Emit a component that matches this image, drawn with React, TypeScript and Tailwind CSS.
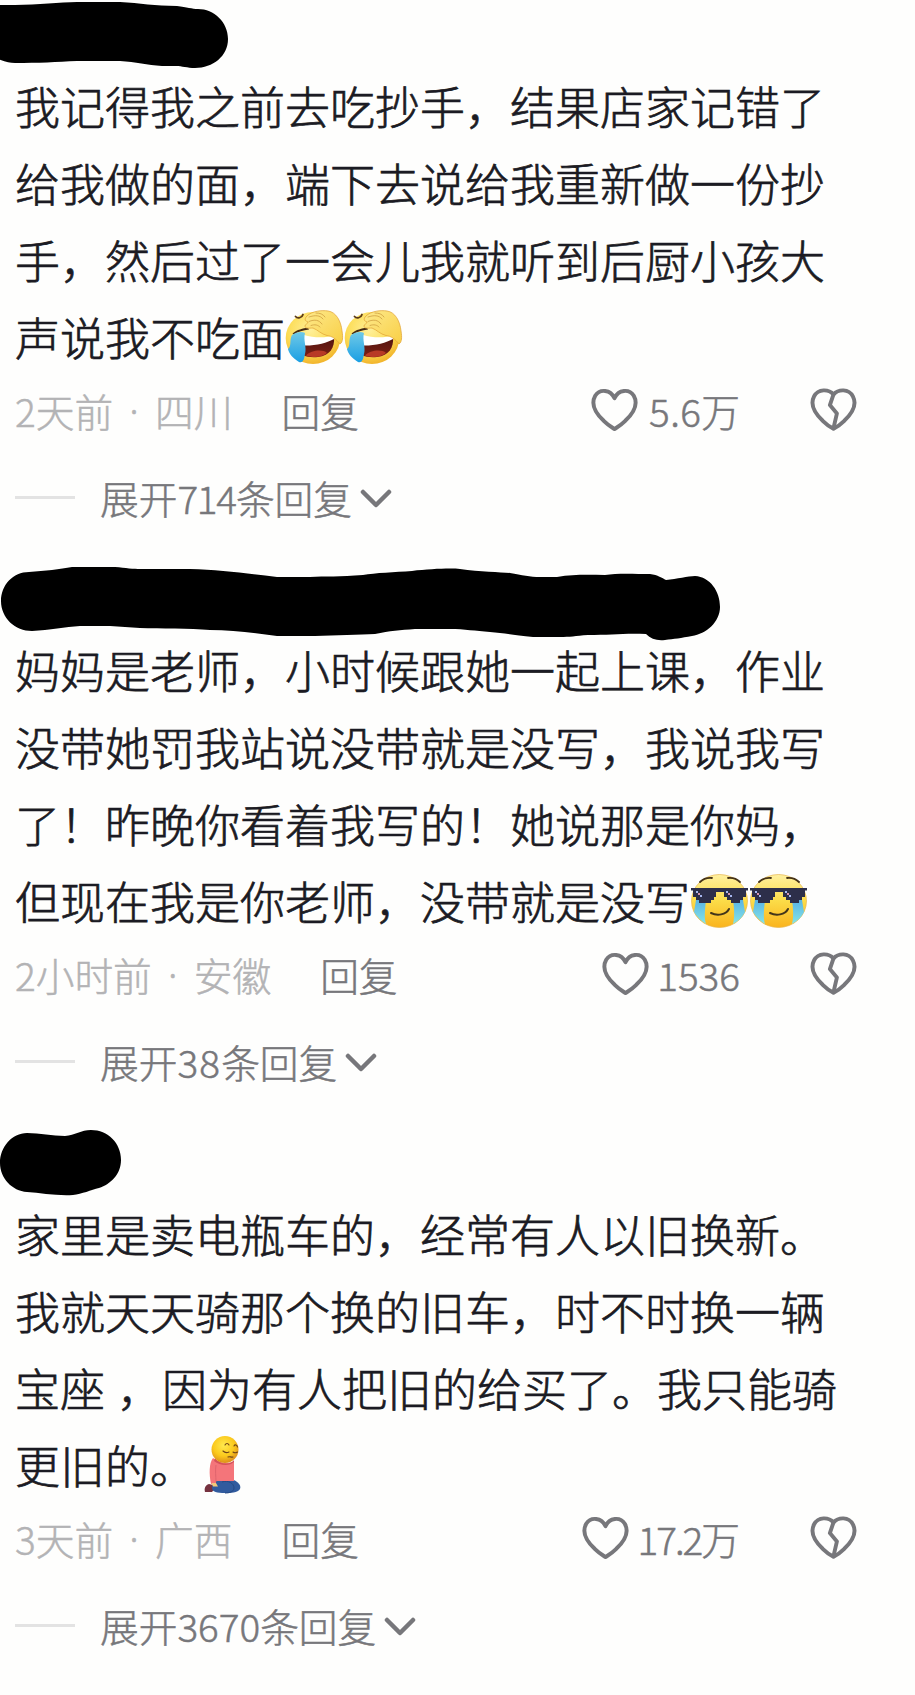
import React from "react";

type EmojiName = "facepalm" | "cool" | "kneel";

interface Comment {
  id: number;
  lines: string[];
  emojis: EmojiName[];
  time: string;
  place: string;
  likes: string;
  likesClass: string;
  replies: string;
  repliesClass: string;
  mask: string;
}

const comments: Comment[] = [
  {
    id: 1,
    lines: [
      "我记得我之前去吃抄手，结果店家记错了",
      "给我做的面，端下去说给我重新做一份抄",
      "手，然后过了一会儿我就听到后厨小孩大",
      "声说我不吃面",
    ],
    emojis: ["facepalm", "facepalm"],
    time: "2天前",
    place: "四川",
    likes: "5.6",
    likesClass: "ml-[11px] tracking-[0.4px]",
    replies: "714",
    repliesClass: "tracking-[-1.2px]",
    mask: "M-10 5H15C38 5 60 2 77 2H120C140 3 155 6 177 6C187 7 192 9 198 9C214 9 228 22 228 39C228 56 213 68 195 68C187 68 182 66 176 66H162C147 65 136 62 120 61H77C57 62 38 63 15 63C8 63 3 61 -10 56Z",
  },
  {
    id: 2,
    lines: [
      "妈妈是老师，小时候跟她一起上课，作业",
      "没带她罚我站说没带就是没写，我说我写",
      "了！昨晚你看着我写的！她说那是你妈，",
      "但现在我是你老师，没带就是没写",
    ],
    emojis: ["cool", "cool"],
    time: "2小时前",
    place: "安徽",
    likes: "1536",
    likesClass: "ml-[8px] tracking-[0px]",
    replies: "38",
    repliesClass: "tracking-[1.2px]",
    mask: "M29 8C45 7 60 5 72 3H115C126 4 133 5 141 5H190C220 6 245 9 277 13H310C325 12 340 13 363 11C375 9 395 8 412 7C430 5 450 4 460 5C480 8 500 8 510 9C522 11 530 13 540 13H557C575 10 590 11 605 11C617 9 635 10 650 10C658 11 662 14 666 16C677 15 688 12 695 12C710 13 720 27 720 43C720 58 706 70 692 72C681 74 674 75 665 76C657 77 651 75 646 70C625 69 610 71 588 71C575 72 570 73 560 73H533C513 71 503 69 490 68C475 67 465 65 450 65H415C400 66 390 67 375 70C360 71 335 71 315 72H277C255 69 233 66 210 66C190 64 160 65 140 64L110 62H80C65 63 50 66 32 67C15 67 1 54 1 37C1 21 13 8 29 8Z",
  },
  {
    id: 3,
    lines: [
      "家里是卖电瓶车的，经常有人以旧换新。",
      "我就天天骑那个换的旧车，时不时换一辆",
      "宝座 ，因为有人把旧的给买了。我只能骑",
      "更旧的。",
    ],
    emojis: ["kneel"],
    time: "3天前",
    place: "广西",
    likes: "17.2",
    likesClass: "ml-[9px] tracking-[-2px]",
    replies: "3670",
    repliesClass: "tracking-[0px]",
    mask: "M27 5C40 5 52 8 65 8C75 7 81 2 91 2C108 2 121 15 121 32C121 46 111 56 99 60C91 62 82 66 73 67C57 68 41 65 27 64C12 63 0 50 0 35C0 19 12 5 27 5Z",
  },
];

const FacepalmEmoji = () => (
  <svg viewBox="0 0 59 60" className="h-[60px] w-[59px]">
    <defs>
      <radialGradient id="face" cx="45%" cy="35%" r="65%">
        <stop offset="0" stopColor="#fff09a" />
        <stop offset="0.65" stopColor="#fcdc55" />
        <stop offset="1" stopColor="#f2b52c" />
      </radialGradient>
      <linearGradient id="tear" x1="0" y1="0" x2="0" y2="1">
        <stop offset="0" stopColor="#6fc9e8" />
        <stop offset="1" stopColor="#1a9fe3" />
      </linearGradient>
      <linearGradient id="mouth" x1="0" y1="0" x2="0" y2="1">
        <stop offset="0" stopColor="#4f1410" />
        <stop offset="1" stopColor="#7d2014" />
      </linearGradient>
      <linearGradient id="hand" x1="0" y1="0" x2="1" y2="1">
        <stop offset="0" stopColor="#fde98c" />
        <stop offset="1" stopColor="#f9cf45" />
      </linearGradient>
    </defs>
    <ellipse cx="28" cy="31" rx="27.3" ry="26" fill="url(#face)" />
    <path d="M18 36L49 30C50 40 45 49 33 50C27 50.5 21 50 18 48Z" fill="url(#mouth)" />
    <path d="M21 48.5C26 43 38 42 42 46C37 50.5 28 51 21 48.5Z" fill="#b83a26" />
    <path d="M19 28C29 31 40 31 50 28.5L49 32C42 36 30 39 18 38.5Z" fill="#fff" />
    <path d="M7.5 26.5C12 22.5 18 21.5 23 20.5L24 22.5C18 23.5 13 24.5 9 27.5Z" fill="#462b14" />
    <path d="M10.5 9.5C12.5 12 17 11 18 7.5" fill="none" stroke="#5b3a18" strokeWidth="1.8" strokeLinecap="round" />
    <path d="M7 28C11 25 17 24 20 26C18 33 22 40 20 47C19 53 18 56 14 55C8 51 4 47 3 42C7 39 4 33 7 28Z" fill="url(#tear)" />
    <path d="M22 9C27 4 37 3 43 4C51 5 56 14 57 24C58 30 58 35 55 37C51 32 47 29 42 28.5C36 27 33 23 28 21C24 21 20 22 20 19C20 17 23 17 23 15C20 14 19 12 22 9Z" fill="url(#hand)" stroke="#e3a83a" strokeWidth="0.8" />
    <path d="M24 10C30 8 35 8 38 12M24 14.5C30 12 34 13 37 17M26 18.5C30 17 33 18 35 20M31 6C35 6 38 7 40 10" fill="none" stroke="#cfa040" strokeWidth="0.8" strokeLinecap="round" />
  </svg>
);

const CoolEmoji = () => (
  <svg viewBox="0 0 59 60" className="h-[60px] w-[59px]">
    <defs>
      <linearGradient id="cool" x1="0" y1="0" x2="0" y2="1">
        <stop offset="0" stopColor="#fff0a0" />
        <stop offset="0.5" stopColor="#fbdc48" />
        <stop offset="1" stopColor="#fab41e" />
      </linearGradient>
      <linearGradient id="stream" x1="0" y1="0" x2="0" y2="1">
        <stop offset="0" stopColor="#58b3e5" />
        <stop offset="1" stopColor="#86e5e6" />
      </linearGradient>
    </defs>
    <ellipse cx="29.5" cy="30" rx="28" ry="26.5" fill="url(#cool)" stroke="#e7b64e" strokeWidth="0.7" />
    <path d="M6 29H16C15 38 14 47 16 53C11 50 7 46 4 41Z" fill="url(#stream)" />
    <path d="M43 29H53L55 41C52 47 48 50 43 53C45 45 44 36 43 29Z" fill="url(#stream)" />
    <path d="M10 11C13 8 17 6.5 22 7M38 7C43 6.5 47 8 50 11" fill="none" stroke="#453317" strokeWidth="1.8" strokeLinecap="round" />
    <path d="M1 17H58V19.5H56V26H53V29H50V32H41V29H37V26H34V21H26V26H24V29H21V32H9V29H6V26H3V19.5H1Z" fill="#2d2f4a" />
    <path d="M6 20H8V22H6ZM10 24H12V26H10ZM36 20H38V22H36ZM40 24H42V26H40Z" fill="#a6b6ef" />
    <path d="M8 22H10V24H8ZM38 22H40V24H38Z" fill="#d792ab" />
    <path d="M21 42C27 45 36 44 39 38" fill="none" stroke="#43351a" strokeWidth="2" strokeLinecap="round" />
  </svg>
);

const KneelEmoji = () => (
  <svg viewBox="0 0 59 60" className="h-[60px] w-[59px]">
    <defs>
      <radialGradient id="head" cx="45%" cy="35%" r="65%">
        <stop offset="0" stopColor="#ffe94e" />
        <stop offset="0.6" stopColor="#fbc91c" />
        <stop offset="1" stopColor="#dc8e1b" />
      </radialGradient>
    </defs>
    <path d="M14 49C10 50 9 54 10 57H17L22 51Z" fill="#76323f" />
    <path d="M18 46L33 44C40 44 47 49 45 54C43 58 35 58 30 58C22 58 17 57 17 53Z" fill="#315b9e" />
    <path d="M27 47C33 45 39 48 39 53C39 57 34 58 30 58" fill="none" stroke="#254984" strokeWidth="1" />
    <path d="M18 23C14 28 14 39 16 49H21V46H39L39 26C35 29 25 29 18 23Z" fill="#f4757a" />
    <path d="M21 30C20 36 21 41 21 47" fill="none" stroke="#d9606a" strokeWidth="0.8" />
    <path d="M16.5 48H21L23 51.5H18Z" fill="#f3c978" />
    <path d="M20 23C25 30 36 30 39 25V27C35 31 25 31 19 26Z" fill="#d4535a" />
    <circle cx="30" cy="14.5" r="13.5" fill="url(#head)" />
    <path d="M30 10C31 8 33 8 34 10M39 11C40 9 42 10 42.5 12M28 16C30 18 32 18 34 17M38 17C40 18.5 41 18 42.5 17M33 22C34.5 21 36 22.5 38 22" fill="none" stroke="#704517" strokeWidth="1.1" strokeLinecap="round" />
  </svg>
);

const emojiMap = {
  facepalm: FacepalmEmoji,
  cool: CoolEmoji,
  kneel: KneelEmoji,
};

const HeartIcon = () => (
  <svg viewBox="0 0 48 46" className="h-[46px] w-[47px]" fill="none" stroke="#77777b" strokeWidth="4" strokeLinejoin="round">
    <path d="M24 11C20 2 9 1 4.3 8.5C-1 18 5 26.5 13 34C17 38 21 40.5 24 42.5C27 40.5 31 38 35 34C43 26.5 49 18 43.7 8.5C39 1 28 2 24 11Z" />
  </svg>
);

const BrokenHeartIcon = () => (
  <svg viewBox="0 0 48 46" className="h-[46px] w-[47px]" fill="none" stroke="#77777b" strokeWidth="4" strokeLinejoin="round">
    <path d="M24 7C19 1.5 8.5 1 4.2 9C-0.5 18 5 26.5 13 34C17 38 21 40.5 24 42.2C27 40.5 31 38 35 34C43 26.5 48.5 18 43.8 9C39.5 1 29 1.5 24 7Z" />
    <path d="M24 7L20.3 18L27.5 26.5L24 41.5" />
  </svg>
);

const CommentItem: React.FC<{ comment: Comment }> = ({ comment }) => (
  <article className="h-[564px]">
    <div className="h-[67px]">
      <svg viewBox="0 0 915 78" className="h-[78px] w-[915px]">
        <path d={comment.mask} />
      </svg>
    </div>
    <div className="pl-[15px] text-[45px] leading-[77px] text-[#1b1b23] [word-spacing:2px] [-webkit-text-stroke:0.7px]">
      {comment.lines.map((line, i) => (
        <p key={line} className="flex h-[77px] items-center whitespace-pre">
          {line}
          {i === comment.lines.length - 1 &&
            comment.emojis.map((name, index) => {
              const Emoji = emojiMap[name];
              return <Emoji key={index} />;
            })}
        </p>
      ))}
    </div>
    <div className="flex h-[70px] items-center pl-[15px] text-[38.7px] text-[#b3b3b5] [-webkit-text-stroke:0.5px]">
      <span>{comment.time}</span>
      <span className="w-[42px] text-center font-['Open_Sans'] text-[44px] leading-none">·</span>
      <span>{comment.place}</span>
      <span className="ml-[49px] text-[#77777b]">回复</span>
      <div className="ml-auto flex items-center text-[#77777b]">
        <HeartIcon />
        <span className={comment.likesClass}>{comment.likes}</span>
        {comment.likes.includes(".") && <span>万</span>}
      </div>
      <div className="mr-[58px] ml-[70px]">
        <BrokenHeartIcon />
      </div>
    </div>
    <div className="flex h-[104px] items-center pl-[15px] text-[38.7px] text-[#77777b] [-webkit-text-stroke:0.5px]">
      <div className="h-[3px] w-[60px] bg-[#e3e3e3]" />
      <span className="ml-[25px]">展开</span>
      <span className={comment.repliesClass}>{comment.replies}</span>
      <span>条回复</span>
      <svg viewBox="0 0 32 20" className="mt-[3px] ml-[8px] h-5 w-8" fill="none" stroke="#77777b" strokeWidth="4.5" strokeLinecap="round" strokeLinejoin="round">
        <path d="M3 3L16 16L29 3" />
      </svg>
    </div>
  </article>
);

const App = () => {
  return (
    <main className="h-[1695px] w-[915px] overflow-hidden bg-[#fefefd] font-['Noto_Sans_CJK_SC',sans-serif] font-light">
      {comments.map((comment) => (
        <CommentItem key={comment.id} comment={comment} />
      ))}
    </main>
  );
};

export default App;
